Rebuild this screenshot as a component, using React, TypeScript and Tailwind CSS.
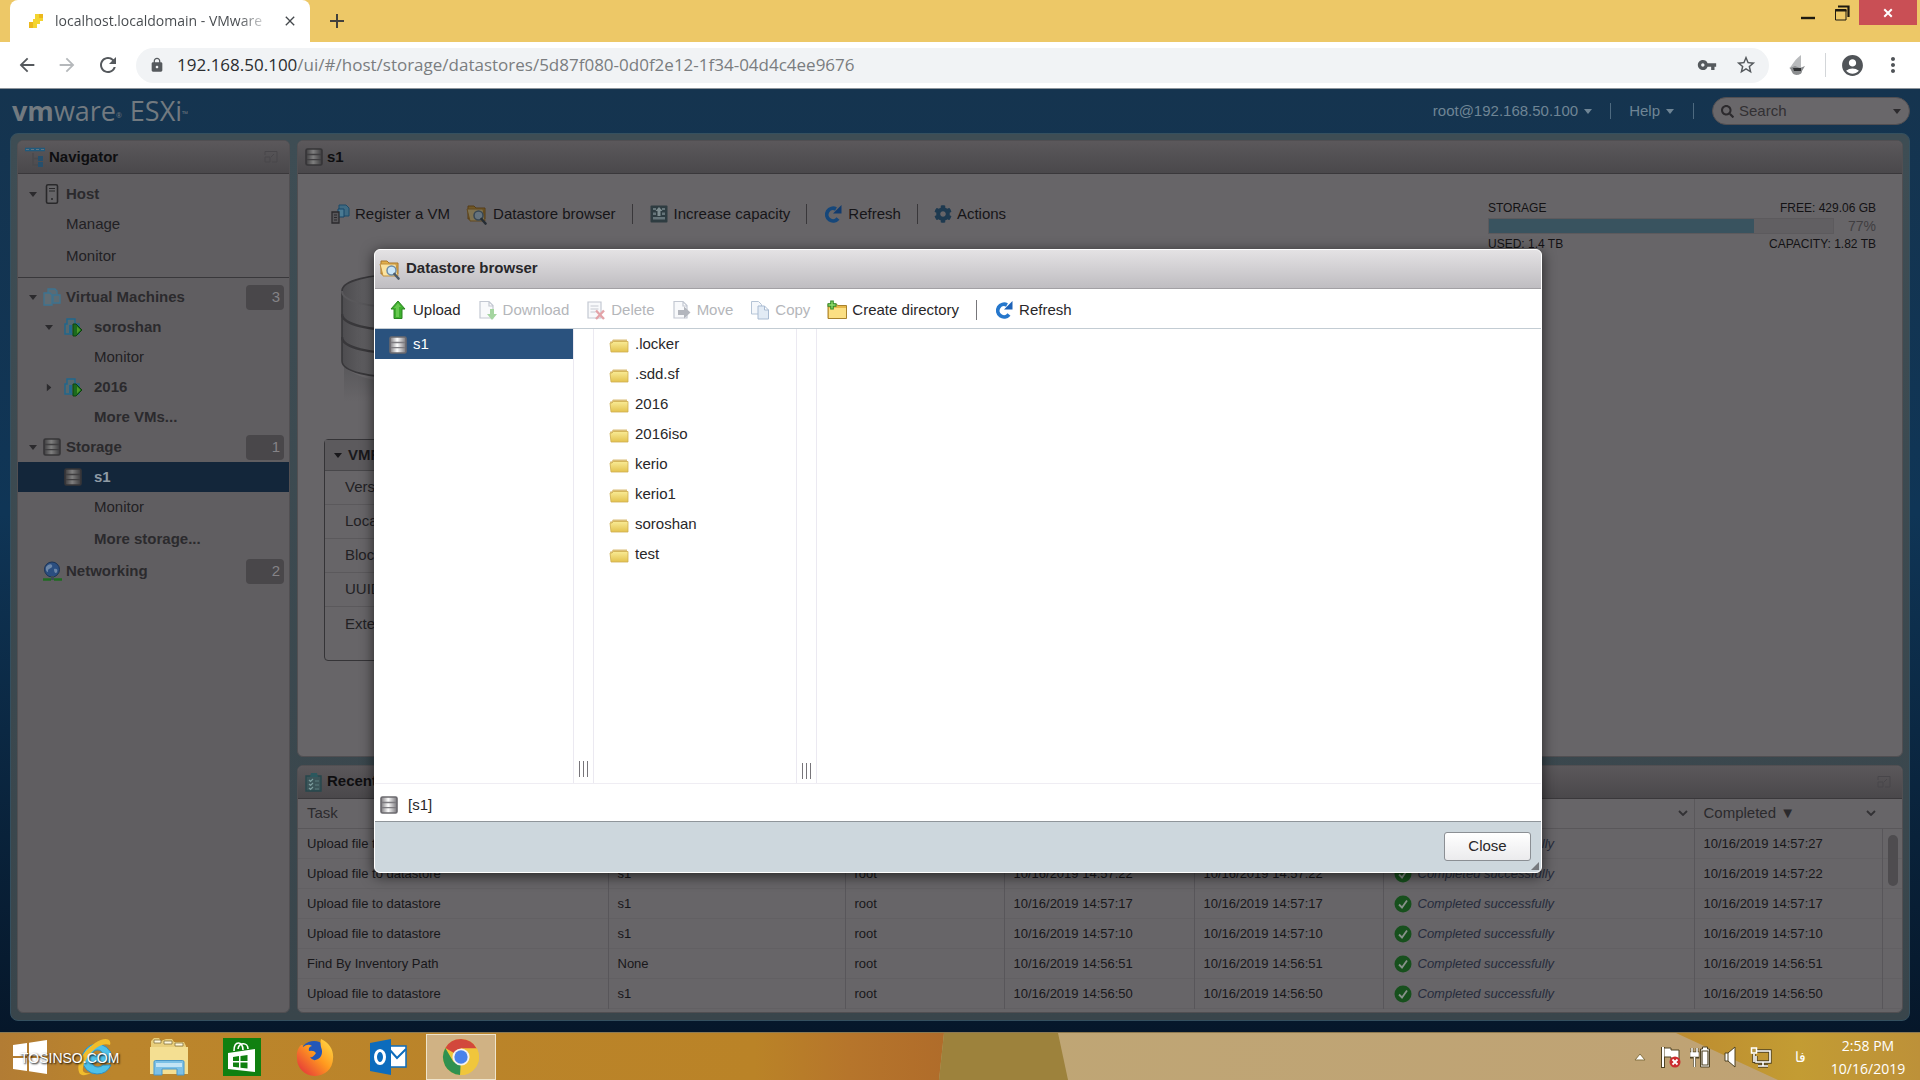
import React from 'react';
import {
  MdArrowBack,
  MdArrowForward,
  MdRefresh,
  MdLock,
  MdVpnKey,
  MdStarBorder,
  MdAccountCircle,
  MdMoreVert,
  MdClose,
  MdAdd,
} from 'react-icons/md';
import { FaSearch, FaCog } from 'react-icons/fa';

type IconProps = { className?: string };

/* ---------- icons ---------- */

const DiskIcon = ({ className = '' }: IconProps) => (
  <svg viewBox="0 0 20 20" className={`size-5 shrink-0 ${className}`} aria-hidden="true">
    <defs>
      <linearGradient id="disk" x1="0" x2="1">
        <stop offset="0" stopColor="#7b797d" />
        <stop offset=".45" stopColor="#fdfdfd" />
        <stop offset="1" stopColor="#77757a" />
      </linearGradient>
    </defs>
    <rect x="2" y="2" width="16" height="16" rx="1.500" fill="url(#disk)" stroke="#6b696e" strokeWidth="1.600" />
    <path d="M3 7.500h14M3 12.700h14" fill="none" stroke="#7d7b80" strokeWidth="1.300" />
  </svg>
);

const FolderIcon = () => (
  <svg viewBox="0 0 20 20" className="size-5 shrink-0" aria-hidden="true">
    <defs>
      <linearGradient id="folder" x1="0" x2="0" y1="0" y2="1">
        <stop offset="0" stopColor="#f9eb96" />
        <stop offset="1" stopColor="#e3c24e" />
      </linearGradient>
    </defs>
    <path d="M1 6.500h1.500L4 4.500h14v10H2z" fill="#dcc07a" />
    <path d="M1 8h2l1.500-1.500H19V17H2z" fill="url(#folder)" stroke="#cfae50" strokeWidth=".8" />
  </svg>
);

const BrowseIcon = ({ className = '' }: IconProps) => (
  <svg viewBox="0 0 22 22" className={`size-[22px] shrink-0 ${className}`} aria-hidden="true">
    <path d="M2 16V3h6l2 2h9v11z" fill="#e2b04c" stroke="#a9772a" />
    <path d="M1 6h16l2 12H4z" fill="#fbe3a0" stroke="#c2903c" />
    <circle cx="12.500" cy="12.500" r="4.500" fill="#c9e6fa" stroke="#6d8ba6" strokeWidth="1.500" />
    <path d="M15.500 16l4 4.500" stroke="#4d5a68" strokeWidth="2.600" strokeLinecap="round" />
  </svg>
);

const UploadIcon = () => (
  <svg viewBox="0 0 20 20" className="size-5 shrink-0" aria-hidden="true">
    <path d="M10 1l7 8h-3v9.500H6V9H3z" fill="#3fb02f" stroke="#2a8420" strokeLinejoin="round" />
    <path d="M10 3l3 4H11v10H8V8H6z" fill="#7ad35f" opacity=".7" />
  </svg>
);

const PageShape = () => (
  <path d="M2 1.500h9l4 4V18H2zM11 1.500V6h4" fill="#f8f9fb" stroke="#c3c8d2" strokeWidth="1.200" />
);

const DownloadIcon = () => (
  <svg viewBox="0 0 20 20" className="size-5 shrink-0" aria-hidden="true">
    <PageShape />
    <path d="M12 9h4v5h3l-5 6-5-6h3z" fill="#a5d5a0" />
  </svg>
);

const DeleteIcon = () => (
  <svg viewBox="0 0 20 20" className="size-5 shrink-0" aria-hidden="true">
    <path d="M2 2h13v16H2z" fill="#f8f9fb" stroke="#c3c8d2" strokeWidth="1.200" />
    <path d="M4.500 6h8M4.500 9h8M4.500 12h5" stroke="#c6cad2" strokeWidth="1.200" />
    <path d="M10 10.500l8 8.500M18 10.500L10 19" stroke="#e3a3a8" strokeWidth="2.400" />
  </svg>
);

const MoveIcon = () => (
  <svg viewBox="0 0 20 20" className="size-5 shrink-0" aria-hidden="true">
    <PageShape />
    <path d="M6 10h6V6.500l6.500 6-6.500 6V15H6z" fill="#b3b6bd" />
  </svg>
);

const CopyIcon = () => (
  <svg viewBox="0 0 20 20" className="size-5 shrink-0" aria-hidden="true">
    <path d="M1.500 1.500h7l3 3V14h-10z" fill="#f4f7fb" stroke="#b5c4d6" />
    <path d="M8 6h6.500l4 4v9H8zM14.500 6v4h4" fill="#e2ebf5" stroke="#a9bbd2" />
  </svg>
);

const NewFolderIcon = () => (
  <svg viewBox="0 0 20 20" className="size-5 shrink-0" aria-hidden="true">
    <path d="M1 18.500V4h8l2 1.500h8.500v13z" fill="#e6b84a" stroke="#a8822d" />
    <path d="M2 18V8h17v10z" fill="#fbdf83" />
    <path d="M5 0.500v9M0.500 5h9" stroke="#2f8a29" strokeWidth="3.600" />
    <path d="M5 1.500v7M1.500 5h7" stroke="#8fdc6c" strokeWidth="1.400" />
  </svg>
);

const RefreshIcon = ({ className = '' }: IconProps) => (
  <svg viewBox="0 0 20 20" className={`size-5 shrink-0 ${className}`} aria-hidden="true">
    <path d="M15 14.500A6.300 6.300 0 1 1 13 5" fill="none" stroke="#2577cc" strokeWidth="3.800" />
    <path d="M10 9.500H18.500V1z" fill="#1d62b8" />
  </svg>
);

const VmIcon = ({ className = '' }: IconProps) => (
  <svg viewBox="0 0 20 20" className={`size-5 shrink-0 ${className}`} aria-hidden="true">
    <path d="M6 2h7l2 2v8H6z" fill="#5b6b74" stroke="#3d7390" strokeWidth="1.300" />
    <path d="M2 6h6l2 2v10H2z" fill="#616c73" stroke="#3d7390" strokeWidth="1.300" />
    <path d="M11 8h7v8h-7z" fill="#5d6b73" stroke="#3d7390" strokeWidth="1.300" />
  </svg>
);

const RunningVmIcon = () => (
  <svg viewBox="0 0 20 20" className="size-5 shrink-0" aria-hidden="true">
    <path d="M4 2h8v5h4v10H2V7h2z" fill="#56686f" stroke="#22678c" strokeWidth="1.500" />
    <path d="M6 8h3v8H6z" fill="#22678c" />
    <path d="M10 7h3l6 6-6 6h-3z" fill="#1c6a1d" stroke="#0d4210" />
    <path d="M14 9.500l3.500 3.500-3.500 3.500z" fill="#4c9a2a" />
  </svg>
);

const RegisterIcon = () => (
  <svg viewBox="0 0 20 20" className="size-5 shrink-0" aria-hidden="true">
    <path d="M9 1h7l3 3v8H9z" fill="#3f6a82" stroke="#1d4a68" />
    <path d="M8 5h6v8H8z" fill="#4a7a92" stroke="#174566" />
    <path d="M2 8h7v11H2z" fill="#58575a" stroke="#2b2a2d" strokeWidth="1.300" />
    <path d="M4 11h3M4 13.500h3M4 16h3" stroke="#2b2a2d" />
  </svg>
);

const IncreaseIcon = () => (
  <svg viewBox="0 0 20 20" className="size-5 shrink-0" aria-hidden="true">
    <rect x="1.500" y="1.500" width="17" height="17" rx="1" fill="#2e3c41" />
    <path d="M4 4h3v2H4zM13 4h3v2h-3zM4 13h12v2.500H4zM4 8.500h3V11H4zM13 8.500h3V11h-3z" fill="#66757a" />
    <path d="M10 3l3.500 4h-2v5h-3V7h-2z" fill="#7e8d90" />
  </svg>
);

const HostIcon = () => (
  <svg viewBox="0 0 20 20" className="size-5 shrink-0" aria-hidden="true">
    <rect x="4.500" y=".8" width="11" height="18.400" rx="1.500" fill="#656467" stroke="#29282a" strokeWidth="1.600" />
    <path d="M7 4.500h6M7 7h6" stroke="#29282a" strokeWidth="1.200" />
    <circle cx="10" cy="15" r="1" fill="#29282a" />
  </svg>
);

const NavigatorIcon = () => (
  <svg viewBox="0 0 22 20" className="h-5 w-[22px] shrink-0" aria-hidden="true">
    <path d="M1 2.500h20" stroke="#215a7c" strokeWidth="3.600" />
    <path d="M2 2.500h18" stroke="#5f7584" strokeDasharray="3 2" />
    <path d="M9 6v12h6M9 11.500h6" fill="none" stroke="#4a4a4d" strokeWidth="1.500" />
    <path d="M14 9h5v5h-5zM14 15h5v5h-5z" fill="#264f6c" />
  </svg>
);

const NetworkIcon = () => (
  <svg viewBox="0 0 20 20" className="size-5 shrink-0" aria-hidden="true">
    <circle cx="10" cy="8.500" r="7.500" fill="#2b4e80" stroke="#1b3355" />
    <path d="M6 4c3-2 5 0 4 2s-4 1-4 4-3-1-2-4zM12 8c3-1 4 1 3 3s-3 1-3-3z" fill="#6c86a6" />
    <path d="M1 18.500h8M12 18.500h8" stroke="#1f6b22" strokeWidth="2.600" />
    <path d="M9 15h3v4H9z" fill="#3d4c55" />
  </svg>
);

const TasksIcon = () => (
  <svg viewBox="0 0 20 20" className="size-5 shrink-0" aria-hidden="true">
    <path d="M2 4h15v15H2z" fill="#3b5458" stroke="#27474c" strokeWidth="1.400" />
    <path d="M7 1h6l1 4H6z" fill="#2b585e" />
    <path d="M5 8l1.500 1.500L9 7M5 12l1.500 1.500L9 11M5 16l1.500 1.500L9 15" fill="none" stroke="#7b9b9c" strokeWidth="1.200" />
    <path d="M11 9h4M11 13h4M11 17h4" stroke="#5d7c7e" />
  </svg>
);

const MinimizePanelIcon = () => (
  <svg viewBox="0 0 16 16" className="size-4 shrink-0" aria-hidden="true">
    <path d="M2 6V2.500h12V13H9" fill="none" stroke="#48464a" />
    <path d="M2 8h5v5H2zM8 8l3-3" fill="none" stroke="#48464a" />
  </svg>
);

const Caret = ({ className = '' }: IconProps) => (
  <svg viewBox="0 0 10 6" className={`h-[5px] w-2 shrink-0 ${className}`} aria-hidden="true">
    <path d="M0 0h10L5 6z" fill="currentColor" />
  </svg>
);

const CheckIcon = () => (
  <svg viewBox="0 0 18 18" className="size-[18px] shrink-0" aria-hidden="true">
    <circle cx="9" cy="9" r="8.500" fill="#17501d" />
    <path d="M5 9.500l3 3 5-7" fill="none" stroke="#87918a" strokeWidth="1.800" />
  </svg>
);

const BigDisk = () => (
  <svg viewBox="0 0 120 130" className="h-[130px] w-[120px]" aria-hidden="true">
    <defs>
      <linearGradient id="big" x1="0" x2="1">
        <stop offset="0" stopColor="#4d4c4f" />
        <stop offset=".25" stopColor="#646366" />
        <stop offset="1" stopColor="#4d4c4f" />
      </linearGradient>
      <linearGradient id="mirror" x1="0" x2="0" y1="0" y2="1">
        <stop offset="0" stopColor="#59585b" />
        <stop offset="1" stopColor="#676568" />
      </linearGradient>
    </defs>
    <path d="M3 92c15 23 99 23 114 0v36H3z" fill="url(#mirror)" />
    <path d="M1 18C1-4 119-4 119 18v70c0 22-118 22-118 0z" fill="url(#big)" stroke="#38373a" strokeWidth="1.600" />
    <path d="M1 18c0 22 118 22 118 0" fill="none" stroke="#59585b" strokeWidth="2" />
    <path d="M1 41c0 22 118 22 118 0M1 64c0 22 118 22 118 0" fill="none" stroke="#39383b" strokeWidth="2.500" />
  </svg>
);

/* ---------- browser window ---------- */

const TabBar = () => (
  <div className="flex h-[42px] shrink-0 items-stretch bg-[#edc867] pl-[10px]">
    <div className="flex w-[300px] items-center rounded-t-lg bg-white pr-3 pl-[18px]">
      <svg viewBox="0 0 16 16" className="size-4 shrink-0" aria-hidden="true">
        <path d="M7 1h8v7h-3v3H9v4H1V9h4V6h2z" fill="#f3d430" />
        <path d="M1 9h4v6H1zM11 1h4v4h-4z" fill="#ecb81c" />
      </svg>
      <span className="ml-[11px] flex-1 overflow-hidden bg-gradient-to-r from-[#45494d] from-85% to-white bg-clip-text text-sm whitespace-nowrap text-transparent">
        localhost.localdomain - VMware
      </span>
      <button aria-label="Close tab" className="ml-3 text-[#45494d]">
        <MdClose className="size-4" />
      </button>
    </div>
    <button aria-label="New tab" className="ml-[15px] text-[#43413c]">
      <MdAdd className="size-6" />
    </button>
    <div className="ml-auto flex items-start pr-[3px]">
      <button aria-label="Minimize" className="flex h-[25px] w-[34px] items-center justify-center">
        <svg viewBox="0 0 16 16" className="size-4"><path d="M1 13h14" stroke="#1e1a10" strokeWidth="2.400" /></svg>
      </button>
      <button aria-label="Restore" className="flex h-[25px] w-[34px] items-center justify-center">
        <svg viewBox="0 0 16 16" className="size-4">
          <path d="M1.500 4.500h10.500V15H1.500z" fill="none" stroke="#1e1a10" />
          <path d="M1 5.500h11.500M4 1.500h10.500V12" fill="none" stroke="#1e1a10" strokeWidth="2.200" />
        </svg>
      </button>
      <button aria-label="Close" className="flex h-[25px] w-[58px] items-center justify-center bg-[#c94f55] text-white">
        <svg viewBox="0 0 12 12" className="size-[10px]"><path d="M1.500 1.500l9 9M10.500 1.500l-9 9" stroke="currentColor" strokeWidth="2.400" /></svg>
      </button>
    </div>
  </div>
);

const AddressBar = () => (
  <div className="flex h-[47px] shrink-0 items-center border-b border-[#8d949b] bg-white pr-[15px] pl-4">
    <button aria-label="Back" className="text-[#55595d]"><MdArrowBack className="size-[22px]" /></button>
    <button aria-label="Forward" className="ml-[18px] text-[#b5b8bb]"><MdArrowForward className="size-[22px]" /></button>
    <button aria-label="Reload" className="ml-[18px] text-[#55595d]"><MdRefresh className="size-6" /></button>
    <div className="ml-4 flex h-[35px] flex-1 items-center rounded-full bg-[#f1f3f5] pr-3 pl-[13px] text-[#55595d]">
      <MdLock className="size-4 shrink-0" />
      <div className="ml-3 flex-1 text-[17px] text-[#7a7d80]">
        <span className="text-[#2b2d30]">192.168.50.100</span>/ui/#/host/storage/datastores/5d87f080-0d0f2e12-1f34-04d4c4ee9676
      </div>
      <button aria-label="Passwords"><MdVpnKey className="size-5" /></button>
      <button aria-label="Bookmark" className="ml-[18px]"><MdStarBorder className="size-[22px]" /></button>
    </div>
    <button aria-label="Extension" className="ml-[18px]">
      <svg viewBox="0 0 20 22" className="h-[22px] w-5">
        <path d="M14 1v13l-6 3-6-3c3-1 3-6 12-13z" fill="#b9bbbd" />
        <path d="M3 14l5-2 5 2 5-2-3 5c0 5-9 5-10 1z" fill="#8b8d8f" />
        <path d="M6 14h8v3H7z" fill="#303234" />
      </svg>
    </button>
    <span className="ml-[18px] h-6 w-px bg-[#d3d6d9]" />
    <button aria-label="Profile" className="ml-[14px] text-[#505458]"><MdAccountCircle className="size-[25px]" /></button>
    <button aria-label="Menu" className="ml-4 text-[#505458]"><MdMoreVert className="size-6" /></button>
  </div>
);

/* ---------- ESXi client ---------- */

const ClientHeader = () => (
  <header className="flex h-11 shrink-0 items-center pr-[10px] pl-3 text-[15px] text-[#6f8595]">
    <div className="flex items-baseline font-['Open_Sans'] text-[#727a80]">
      <span className="text-[27px] leading-8">
        <b>vm</b>ware
      </span>
      <sup className="text-[7px]">®</sup>
      <span className="ml-2 text-[27px] leading-8">ESXi</span>
      <sup className="text-[8px]">™</sup>
    </div>
    <button className="ml-auto flex items-center gap-1.5">
      root@192.168.50.100 <Caret />
    </button>
    <span className="mx-[18px] h-4 w-px bg-[#4e6a80]" />
    <button className="flex items-center gap-1.5">
      Help <Caret />
    </button>
    <span className="ml-[19px] h-4 w-px bg-[#4e6a80]" />
    <label className="ml-[18px] flex h-7 w-[198px] items-center rounded-full border border-[#524f52] bg-[#69676a] px-2 text-[#2c2a2d]">
      <FaSearch className="size-[13px] shrink-0" />
      <input
        type="search"
        aria-label="Search"
        placeholder="Search"
        className="ml-[5px] w-0 flex-1 bg-transparent outline-none placeholder:text-[#323033]"
      />
      <Caret />
    </label>
  </header>
);

type NavRow = {
  label: string;
  level: 0 | 1;
  icon?: React.ReactNode;
  caret?: 'down' | 'right';
  badge?: number;
  selected?: boolean;
  bold?: boolean;
  spaced?: boolean;
};

const hostRows: NavRow[] = [
  { label: 'Host', level: 0, icon: <HostIcon />, caret: 'down', bold: true },
  { label: 'Manage', level: 0 },
  { label: 'Monitor', level: 0, spaced: true },
];

const inventoryRows: NavRow[] = [
  { label: 'Virtual Machines', level: 0, icon: <VmIcon />, caret: 'down', badge: 3, bold: true },
  { label: 'soroshan', level: 1, icon: <RunningVmIcon />, caret: 'down', bold: true },
  { label: 'Monitor', level: 1 },
  { label: '2016', level: 1, icon: <RunningVmIcon />, caret: 'right', bold: true },
  { label: 'More VMs...', level: 1, bold: true },
  { label: 'Storage', level: 0, icon: <DiskIcon className="brightness-50" />, caret: 'down', badge: 1, bold: true },
  { label: 's1', level: 1, icon: <DiskIcon className="brightness-50" />, selected: true, bold: true },
  { label: 'Monitor', level: 1 },
  { label: 'More storage...', level: 1, bold: true, spaced: true },
  { label: 'Networking', level: 0, icon: <NetworkIcon />, badge: 2, bold: true, spaced: true },
];

const NavItem = ({ row }: { row: NavRow }) => (
  <a
    href="#"
    className={`flex h-[30px] items-center pr-[5px] ${row.level ? 'pl-[26px]' : 'pl-[10px]'} ${row.spaced ? 'mt-0.5' : ''} ${
      row.selected ? 'bg-[#13263a] text-[#8f9ba5]' : row.bold ? 'text-[#2b2a2d]' : 'text-[#222124]'
    } ${row.bold ? 'font-bold' : ''}`}
  >
    <span className="flex w-[10px] justify-center">
      {row.caret && <Caret className={row.caret === 'right' ? '-rotate-90' : ''} />}
    </span>
    <span className={`flex items-center ${row.level ? 'ml-[9px] w-[31px]' : 'ml-1 w-6'}`}>{row.icon}</span>
    {row.label}
    {row.badge !== undefined && (
      <span className="ml-auto flex h-[25px] w-[38px] items-center justify-end rounded bg-[#49474a] pr-1 font-normal text-[#858387]">
        {row.badge}
      </span>
    )}
  </a>
);

const PanelHeader = ({ icon, title, minimizable }: { icon: React.ReactNode; title: string; minimizable?: boolean }) => (
  <div className="flex h-[33px] shrink-0 items-center justify-between border-b border-[#3a383b] bg-gradient-to-b from-[#5b585b] to-[#4a484b] px-1.5 font-bold text-[#0e0e10]">
    <h2 className="flex items-center gap-[3px]">
      {icon}
      {title}
    </h2>
    {minimizable && (
      <button aria-label={`Minimize ${title}`} className="mr-1">
        <MinimizePanelIcon />
      </button>
    )}
  </div>
);

const Navigator = () => (
  <nav className="w-[273px] shrink-0 overflow-hidden rounded-md border border-[#514f52] bg-[#605e61]">
    <PanelHeader icon={<NavigatorIcon />} title="Navigator" minimizable />
    <div className="border-b border-[#39383b] pt-[5px] pb-1.5">
      {hostRows.map((r) => (
        <NavItem key={r.label} row={r} />
      ))}
    </div>
    <div className="pt-1">
      {inventoryRows.map((r, i) => (
        <NavItem key={i} row={r} />
      ))}
    </div>
  </nav>
);

const ToolButton = ({ icon, label, disabled }: { icon: React.ReactNode; label: string; disabled?: boolean }) => (
  <button disabled={disabled} className="flex items-center gap-[5px] whitespace-nowrap disabled:text-[#b4b6ba]">
    {icon}
    {label}
  </button>
);

const StorageMeter = () => (
  <div className="w-[388px] pt-0.5 text-xs leading-4 text-[#131214]">
    <div className="flex justify-between">
      <span>STORAGE</span>
      <span>FREE: 429.06 GB</span>
    </div>
    <div className="my-0.5 flex items-center justify-between">
      <div className="h-4 w-[346px] border border-[#5c5a5d] bg-[#615f62]">
        <div className="h-full bg-[#39535f]" style={{ width: '77%' }} />
      </div>
      <span className="text-sm leading-4 text-[#403e41]">77%</span>
    </div>
    <div className="flex justify-between">
      <span>USED: 1.4 TB</span>
      <span>CAPACITY: 1.82 TB</span>
    </div>
  </div>
);

const details = [
  ['Version', '5.81'],
  ['Local', 'Yes'],
  ['Block size', '1 MB'],
  ['UUID', '5d87f080-0d0f2e12-1f34-04d4c4ee9676'],
  ['Extent 0', ''],
];

const DatastorePanel = () => (
  <section className="flex flex-1 flex-col overflow-hidden rounded-md border border-[#514f52] bg-[#676568]">
    <PanelHeader icon={<DiskIcon className="brightness-50" />} title="s1" />
    <div className="flex items-start justify-between pt-6 pr-[26px] pl-8 text-[#161518]">
      <div className="flex h-8 items-center gap-4">
        <ToolButton icon={<RegisterIcon />} label="Register a VM" />
        <ToolButton icon={<BrowseIcon className="brightness-50" />} label="Datastore browser" />
        <span className="h-5 w-px bg-[#39373a]" />
        <ToolButton icon={<IncreaseIcon />} label="Increase capacity" />
        <span className="h-5 w-px bg-[#39373a]" />
        <ToolButton icon={<RefreshIcon className="brightness-[.6]" />} label="Refresh" />
        <span className="h-5 w-px bg-[#39373a]" />
        <ToolButton icon={<FaCog className="size-[18px] text-[#1e3a50]" />} label="Actions" />
      </div>
      <StorageMeter />
    </div>
    <div className="mt-[21px] pl-[43px]">
      <BigDisk />
    </div>
    <div className="mt-9 ml-[26px] h-[222px] w-[770px] rounded border border-[#353437] text-[#222124]">
      <h3 className="flex h-[31px] items-center gap-1.5 border-b border-[#48474a] bg-[#5c5a5d] pl-[9px] font-bold text-[#19181b]">
        <Caret /> VMFS details
      </h3>
      <dl>
        {details.map(([k, v]) => (
          <div key={k} className="flex h-[34px] items-center border-b border-[#5b595c] pl-5 last:border-0">
            <dt className="w-60">{k}</dt>
            <dd>{v}</dd>
          </div>
        ))}
      </dl>
    </div>
  </section>
);

const tasks = [
  ['Upload file to datastore', 's1', '10/16/2019 14:57:27'],
  ['Upload file to datastore', 's1', '10/16/2019 14:57:22'],
  ['Upload file to datastore', 's1', '10/16/2019 14:57:17'],
  ['Upload file to datastore', 's1', '10/16/2019 14:57:10'],
  ['Find By Inventory Path', 'None', '10/16/2019 14:56:51'],
  ['Upload file to datastore', 's1', '10/16/2019 14:56:50'],
];

const columns = ['Task', 'Target', 'Initiator', 'Queued', 'Started', 'Result', 'Completed ▼'];

const RecentTasks = () => (
  <section className="overflow-hidden rounded-md border border-[#514f52] bg-[#676568] pb-[3px]">
    <PanelHeader icon={<TasksIcon />} title="Recent tasks" minimizable />
    <div className="relative">
      <table className="w-full table-fixed border-collapse text-left text-[13px] text-[#18171a]">
        <colgroup>
          <col />
          <col className="w-[237px]" />
          <col className="w-[159px]" />
          <col className="w-[190px]" />
          <col className="w-[189px]" />
          <col className="w-[311px]" />
          <col className="w-[188px]" />
          <col className="w-5" />
        </colgroup>
        <thead>
          <tr className="h-[30px] border-b border-[#59575a] text-[15px] text-[#2b2a2d]">
            {columns.map((c) => (
              <th key={c} scope="col" className="border-r border-[#5a585b] py-0 pr-1.5 pl-[9px] font-normal nth-7:border-0">
                <span className="flex items-center justify-between">
                  {c}
                  <svg viewBox="0 0 10 6" className="h-1.5 w-2.5" aria-hidden="true"><path d="M1 1l4 4 4-4" fill="none" stroke="#323134" strokeWidth="1.800" /></svg>
                </span>
              </th>
            ))}
            <td />
          </tr>
        </thead>
        <tbody>
          {tasks.map(([task, target, time], i) => (
            <tr key={i} className="h-[30px] border-b border-[#626063]">
              {[task, target, 'root', time, time].map((v, j) => (
                <td key={j} className="border-r border-[#58565a] py-0 pl-[9px]">{v}</td>
              ))}
              <td className="border-r border-[#58565a] py-0 pl-[10px]">
                <span className="flex items-center gap-1.5 text-[#262c3c] italic">
                  <CheckIcon />
                  Completed successfully
                </span>
              </td>
              <td className="border-r border-[#58565a] py-0 pl-[9px]">{time}</td>
              <td />
            </tr>
          ))}
        </tbody>
      </table>
      <span className="absolute top-9 right-1 h-[51px] w-[10px] rounded-full bg-[#4e4c4f]" />
    </div>
  </section>
);

/* ---------- datastore browser dialog ---------- */

const folders = ['.locker', '.sdd.sf', '2016', '2016iso', 'kerio', 'kerio1', 'soroshan', 'test'];

const Gutter = ({ low }: { low?: boolean }) => (
  <div className={`flex w-[21px] items-end justify-center gap-[3px] border-x border-[#ebe9f1] ${low ? 'pb-1' : 'pb-1.5'}`}>
    <span className="h-4 w-px bg-[#77757a]" />
    <span className="h-4 w-px bg-[#77757a]" />
    <span className="h-4 w-px bg-[#77757a]" />
  </div>
);

const DatastoreBrowser = () => (
  <div
    role="dialog"
    aria-labelledby="dialog-title"
    className="flex h-[624px] w-[1168px] flex-col overflow-hidden rounded-md border border-white bg-white text-[#28272a] shadow-[0_3px_14px_rgba(0,0,0,0.65)]"
  >
    <div className="flex h-[39px] shrink-0 items-center gap-[5px] border-b border-[#a2a0a4] bg-gradient-to-b from-[#e4e2e4] to-[#bfbdc1] px-1">
      <BrowseIcon />
      <h2 id="dialog-title" className="font-bold">Datastore browser</h2>
    </div>
    <div className="flex h-10 shrink-0 items-center gap-[17px] border-b border-[#c3ccd3] px-[13px] pt-1">
      <ToolButton icon={<UploadIcon />} label="Upload" />
      <ToolButton icon={<DownloadIcon />} label="Download" disabled />
      <ToolButton icon={<DeleteIcon />} label="Delete" disabled />
      <ToolButton icon={<MoveIcon />} label="Move" disabled />
      <ToolButton icon={<CopyIcon />} label="Copy" disabled />
      <ToolButton icon={<NewFolderIcon />} label="Create directory" />
      <span className="h-5 w-px bg-[#77767a]" />
      <ToolButton icon={<RefreshIcon />} label="Refresh" />
    </div>
    <div className="flex flex-1 border-b border-[#efedf3]">
      <ul className="w-[198px]">
        <li>
          <a href="#" className="flex h-[30px] items-center gap-[5px] bg-[#2a527e] pt-0.5 pl-[13px] text-white">
            <DiskIcon /> s1
          </a>
        </li>
      </ul>
      <Gutter />
      <ul className="w-[202px] pl-[15px]">
        {folders.map((f) => (
          <li key={f}>
            <a href="#" className="flex h-[30px] items-center gap-1.5 pt-0.5">
              <FolderIcon />
              {f}
            </a>
          </li>
        ))}
      </ul>
      <Gutter low />
      <div className="flex-1" />
    </div>
    <div className="flex h-[38px] shrink-0 items-center gap-[9px] border-b border-[#8f959a] px-1 pt-1.5">
      <DiskIcon /> [s1]
    </div>
    <div className="relative flex h-[50px] shrink-0 items-center justify-end bg-[#cdd7dd] pr-[10px]">
      <button className="h-[29px] w-[87px] rounded-[3px] border border-[#8b8f94] bg-gradient-to-b from-white to-[#ebebed]">
        Close
      </button>
      <svg viewBox="0 0 8 8" className="absolute right-0.5 bottom-0.5 size-2" aria-hidden="true">
        <path d="M8 0v8H0z" fill="#76797d" />
      </svg>
    </div>
  </div>
);

/* ---------- desktop taskbar ---------- */

const Wallpaper = () => (
  <svg viewBox="0 0 1920 48" preserveAspectRatio="none" className="absolute inset-0 size-full" aria-hidden="true">
    <defs>
      <linearGradient id="wl" x1="0" x2="1">
        <stop offset="0" stopColor="#b27c34" />
        <stop offset=".12" stopColor="#bb852c" />
        <stop offset=".8" stopColor="#ba8327" />
        <stop offset=".9" stopColor="#b6752b" />
        <stop offset="1" stopColor="#b06c2a" />
      </linearGradient>
      <linearGradient id="wt" x1="0" x2="1">
        <stop offset="0" stopColor="#bfaa76" />
        <stop offset="1" stopColor="#bfa274" />
      </linearGradient>
      <linearGradient id="wg" x1="0" x2="1">
        <stop offset="0" stopColor="#bd8c30" />
        <stop offset=".5" stopColor="#c39c33" />
        <stop offset="1" stopColor="#bd9139" />
      </linearGradient>
    </defs>
    <path d="M0 0h1920v48H0z" fill="url(#wt)" />
    <path d="M0 0h944l-5 48H0z" fill="url(#wl)" />
    <path d="M944 0h114l10 48H939z" fill="#9d823c" />
    <path d="M1676 0h244v48h-142z" fill="url(#wg)" />
  </svg>
);

const WindowsLogo = () => (
  <svg viewBox="0 0 34 34" className="size-[34px]"><path d="M0 5l14-2v13H0zM16 2.700L34 0v16H16zM0 18h14v13L0 29zM16 18h18v16l-18-2.700z" fill="#fff" /></svg>
);
const IeLogo = () => (
  <svg viewBox="0 0 42 40" className="h-10 w-[42px]">
    <path d="M29 25H17q1 5 6 5 3 0 5-2h8q-4 9-14 9A15 15 0 1 1 37 20v5zM17 18h11q-1-5-5.500-5T17 18z" fill="#4fc1e8" stroke="#2c8fc4" />
    <path d="M35 8C37 2 30-1 20 6 8 14 1 27 4 35c1 4 6 4 12 1-6 1-9-1-8-5C9 21 24 3 35 8z" fill="#f1bd2c" />
  </svg>
);
const ExplorerLogo = () => (
  <svg viewBox="0 0 40 40" className="size-10">
    <path d="M2 4l3-3h5l2 3 5-2h6l2 3h10l2 4v28H2z" fill="#e9cf7c" />
    <path d="M5 3h7v3H5zM15 4h8v3h-8zM26 6h8v3h-8z" fill="#fff8dc" stroke="#84713c" strokeWidth=".8" />
    <path d="M1 10h38v27H1z" fill="#f4df92" />
    <path d="M5 38V25q0-1.500 1.500-1.500h27Q35 23.500 35 25v13h-7v-6H13v6z" fill="#7cc0e6" stroke="#4a97c8" />
    <path d="M7 26h26v4H7z" fill="#c3e4f5" />
  </svg>
);
const StoreLogo = () => (
  <svg viewBox="0 0 38 38" className="size-[38px]">
    <path d="M0 0h38v38H0z" fill="#108010" />
    <path d="M5 15l27-4v23L5 31z" fill="#fff" />
    <path d="M11 13C11 2 20 3 20 12M15 11C16 4 25 4 25 11" fill="none" stroke="#fff" strokeWidth="1.600" />
    <path d="M10 19l6-1v5h-6zM17.500 18l7-1v6h-7zM10 24.500h6v5l-6-.7zM17.500 24.500h7v6l-7-.8z" fill="#108010" />
  </svg>
);
const FirefoxLogo = () => (
  <svg viewBox="0 0 38 38" className="size-[38px]">
    <defs>
      <linearGradient id="ff" x1="1" x2="0" y1="0" y2="1">
        <stop offset="0" stopColor="#ffe14a" />
        <stop offset=".45" stopColor="#ff9a1f" />
        <stop offset="1" stopColor="#e0253f" />
      </linearGradient>
    </defs>
    <circle cx="18" cy="17" r="14" fill="#2357b8" />
    <path d="M4 8q3-3 3 1 5-4 9-1-4 1-3 5 5-1 7 2-3 5-6 4 3 5 8 2 6-4 3-12-1-5 0-8c9 4 13 12 12 20a18 17.500 0 1 1-36-1Q0 13 4 8z" fill="url(#ff)" />
  </svg>
);
const OutlookLogo = () => (
  <svg viewBox="0 0 38 38" className="size-[38px]">
    <path d="M18 8h19v21H18z" fill="#fff" stroke="#0c6cbd" strokeWidth="1.500" />
    <path d="M20 11l8 9 9-9" fill="none" stroke="#0c6cbd" strokeWidth="2" />
    <path d="M1 5l21-4v36L1 33z" fill="#0c6cbd" />
    <ellipse cx="11" cy="19" rx="4.500" ry="6.500" fill="none" stroke="#fff" strokeWidth="3" />
  </svg>
);
const ChromeLogo = () => (
  <svg viewBox="0 0 40 40" className="size-[38px]">
    <circle cx="20" cy="20" r="19" fill="#f0c63c" />
    <path d="M20 20L3.500 10.500A19 19 0 0 1 36.500 11H20z" fill="#d2483c" />
    <path d="M20 20l-1 18.980A19 19 0 0 1 3.500 10.500L12 25l10 3z" fill="#2f9150" />
    <path d="M28 24L19 39a19 19 0 0 0 17.500-28H20z" fill="#f0c63c" />
    <circle cx="20" cy="20" r="9" fill="#f4f2ee" />
    <circle cx="20" cy="20" r="7" fill="#4a82ea" />
  </svg>
);

const apps = [
  { name: 'Internet Explorer', logo: <IeLogo /> },
  { name: 'File Explorer', logo: <ExplorerLogo /> },
  { name: 'Store', logo: <StoreLogo /> },
  { name: 'Firefox', logo: <FirefoxLogo /> },
  { name: 'Outlook', logo: <OutlookLogo /> },
  { name: 'Chrome', logo: <ChromeLogo />, active: true },
];

const Tray = () => (
  <div className="flex items-center gap-2 text-white">
    <button aria-label="Show hidden icons" className="mr-1.5">
      <svg viewBox="0 0 12 8" className="h-2 w-3"><path d="M1 7h10L6 1z" fill="#fff" stroke="#857243" /></svg>
    </button>
    <svg viewBox="0 0 22 24" className="h-6 w-[22px]" role="img" aria-label="Action center">
      <path d="M3 2v21" stroke="#4e4222" strokeWidth="4" />
      <path d="M4 3h7v2h8v9h-8v-2H4z" fill="#fff" stroke="#4e4222" />
      <path d="M3 2v20" stroke="#fff" strokeWidth="2" />
      <circle cx="15" cy="17" r="5.500" fill="#cb2c30" />
      <path d="M12.500 14.500l5 5M17.500 14.500l-5 5" stroke="#fff" strokeWidth="1.800" />
    </svg>
    <svg viewBox="0 0 22 24" className="h-6 w-[22px]" role="img" aria-label="Battery">
      <path d="M10.500 4h2V2h5v2h2v18h-9z" fill="#fff" stroke="#4e4222" />
      <path d="M12 6h6v14h-6z" fill="#fff" stroke="#4e4222" strokeWidth="1.200" />
      <path d="M2 3v5M7 3v5M1 8h7v4H1zM4.500 12v10" stroke="#4e4222" strokeWidth="2.800" />
      <path d="M2 3v5M7 3v5M1 8h7v3H1zM4.500 12v10" stroke="#fff" strokeWidth="1.500" fill="#fff" />
    </svg>
    <svg viewBox="0 0 22 24" className="h-6 w-[22px]" role="img" aria-label="Volume">
      <path d="M5 8h3l7-6v20l-7-6H5z" fill="#fff" stroke="#4e4222" />
      <path d="M8 8v8" stroke="#4e4222" />
    </svg>
    <svg viewBox="0 0 22 24" className="h-6 w-[22px]" role="img" aria-label="Network">
      <path d="M7 6h13v11H6V11M13 17v4M8 21h10M4 9v9" fill="none" stroke="#4e4222" strokeWidth="3.400" />
      <path d="M7 6h13v11H6V11M13 17v4M8 21h10M4 9v8" fill="none" stroke="#fff" strokeWidth="1.600" />
      <path d="M1.500 3h5v5h-5z" fill="#b99a45" stroke="#fff" strokeWidth="1.500" />
    </svg>
    <span className="w-10 text-center text-sm">فا</span>
    <time className="w-20 text-center text-sm leading-[23px]">
      2:58 PM
      <br />
      10/16/2019
    </time>
  </div>
);

const Taskbar = () => (
  <footer className="relative h-12 shrink-0 border-t border-[#8d7a52]">
    <Wallpaper />
    <div className="relative flex h-full items-center justify-between pr-3">
      <div className="flex items-center">
        <button aria-label="Start" className="flex w-[61px] justify-center pr-0.5"><WindowsLogo /></button>
        {apps.map((a) => (
          <button
            key={a.name}
            aria-label={a.name}
            className={`mr-[3px] flex h-[46px] w-[70px] items-center justify-center ${
              a.active ? 'border border-[#efe4cb] bg-[#d0b284]' : ''
            }`}
          >
            {a.logo}
          </button>
        ))}
      </div>
      <Tray />
    </div>
    <span className="absolute top-[15px] left-5 font-['Liberation_Sans',sans-serif] text-sm leading-5 text-white [text-shadow:1px_1px_2px_#000]">
      TOSINSO.COM
    </span>
  </footer>
);

export default function App() {
  return (
    <div className="flex min-h-screen flex-col font-['Open_Sans','Noto_Sans',sans-serif]">
      <TabBar />
      <AddressBar />
      <main className="relative flex flex-1 flex-col bg-gradient-to-b from-[#15344f] via-[#0f3556] via-45% to-[#06172a] font-['Liberation_Sans',Arial,sans-serif] text-[15px]">
        <ClientHeader />
        <div className="mx-[10px] mb-[11px] flex flex-1 gap-[7px] rounded-lg border border-[#35505f] bg-gradient-to-b from-[#3e4d54] to-[#39454b] px-1.5 pt-1.5 pb-[7px]">
          <Navigator />
          <div className="flex min-w-0 flex-1 flex-col gap-2">
            <DatastorePanel />
            <RecentTasks />
          </div>
        </div>
        <div className="absolute inset-0 flex items-center justify-center pr-1">
          <DatastoreBrowser />
        </div>
      </main>
      <Taskbar />
    </div>
  );
}
